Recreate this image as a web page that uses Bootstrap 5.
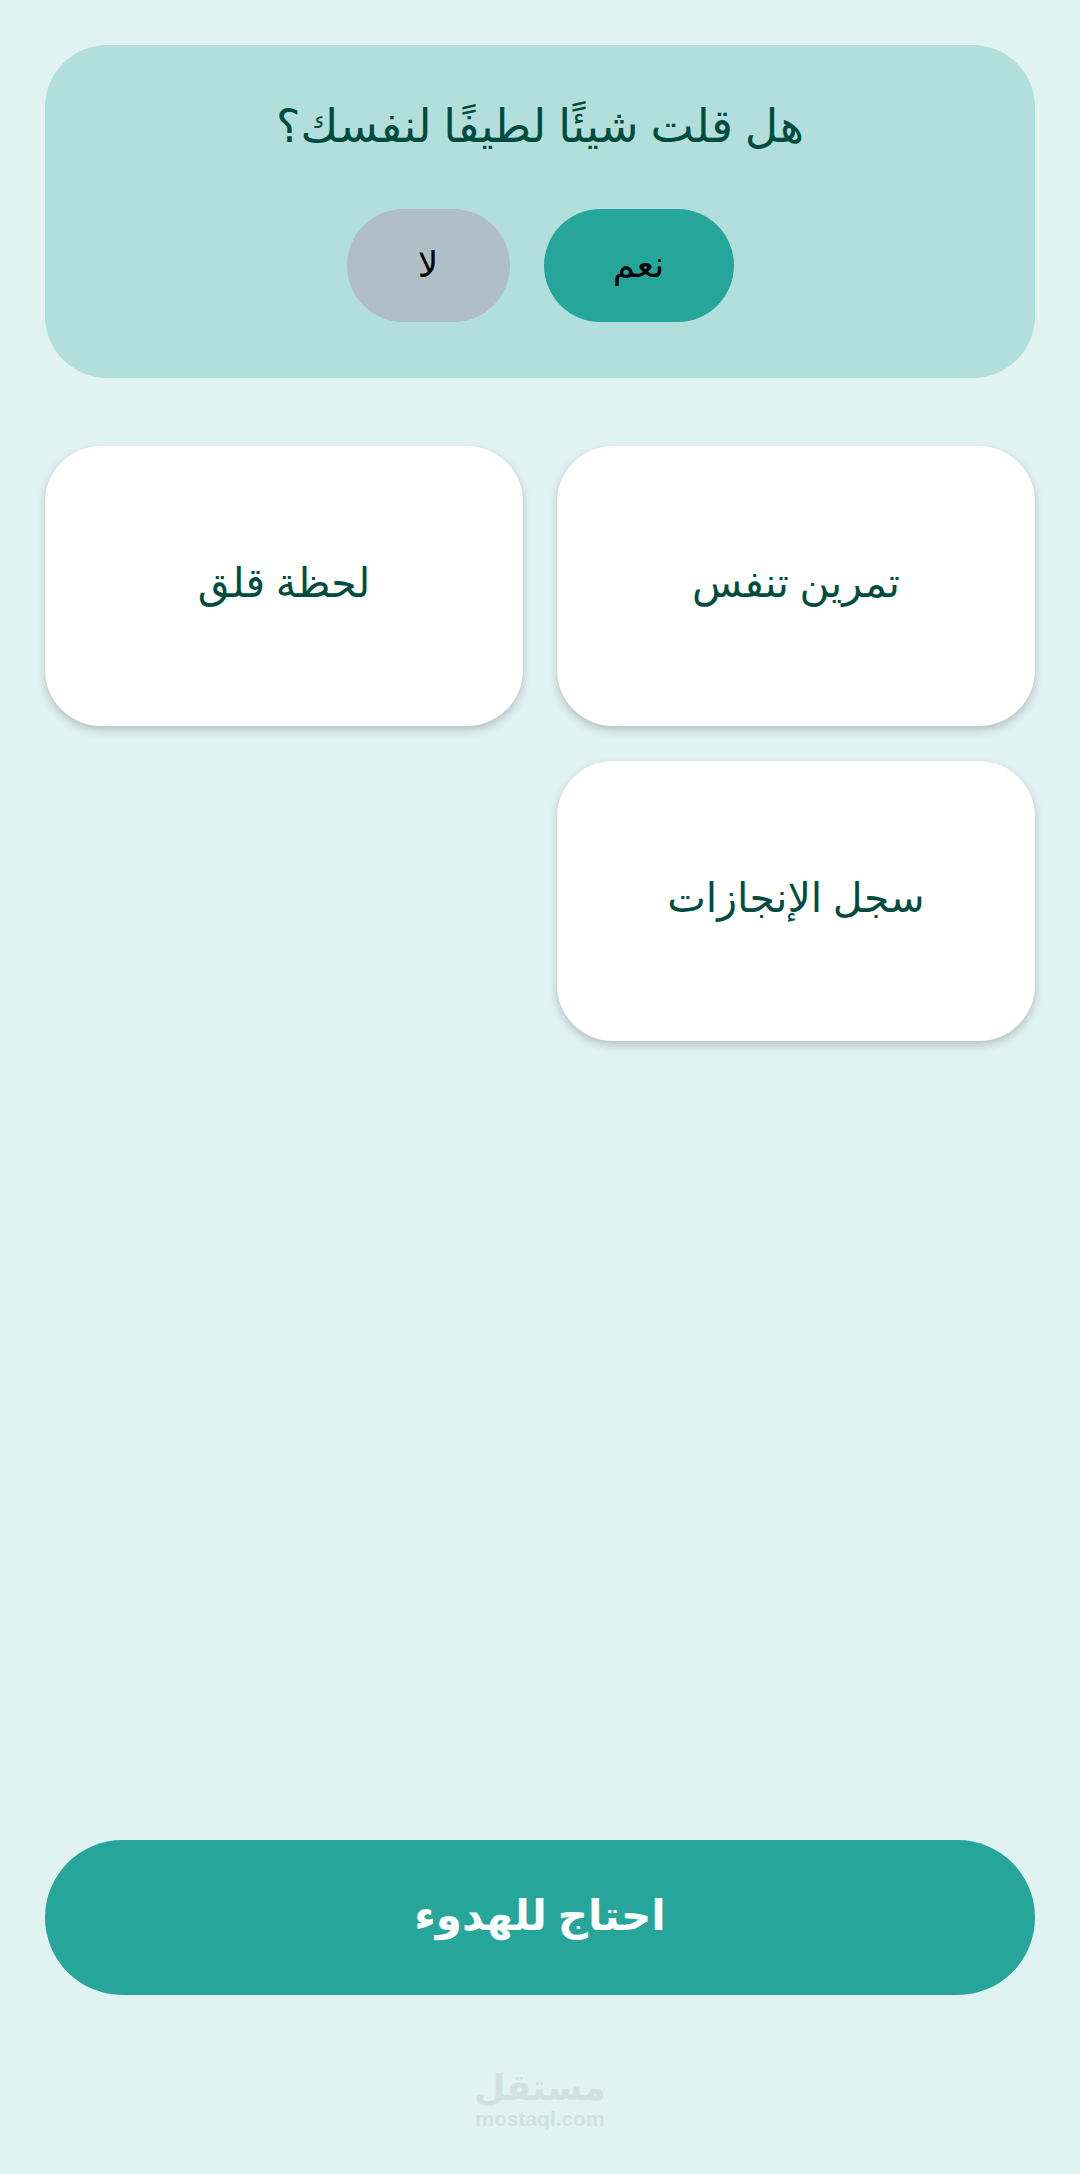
<!DOCTYPE html>
<html lang="ar" dir="rtl">
<head>
    <meta charset="UTF-8">
    <meta name="viewport" content="width=device-width, initial-scale=1.0">
    <title>احتاج للهدوء</title>
    <link href="https://cdn.jsdelivr.net/npm/bootstrap@5.3.2/dist/css/bootstrap.min.css" rel="stylesheet">
    <style>
        body {
            background-color: #e0f2f1;
            font-family: "Noto Sans", "DejaVu Sans", sans-serif;
        }
        .page-wrap {
            height: 2174px;
            padding: 45px 45px 0;
        }
        .ask-panel {
            height: 333px;
            background-color: #b2dfdb;
            border-radius: 62px;
            padding-top: 44px;
        }
        .ask-title {
            color: #004d40;
            font-size: 46px;
            font-weight: 400;
            line-height: 70px;
            margin-bottom: 50px;
        }
        .ask-btn {
            height: 113px;
            border: 0;
            border-radius: 57px;
            color: #000;
            font-size: 36px;
            padding-bottom: 10px;
        }
        .ask-yes { width: 190px; background-color: #26a69a; }
        .ask-no { width: 163px; background-color: #b0bec5; }
        .ask-btns { gap: 34px; }
        .tile-row {
            --bs-gutter-x: 34px;
            --bs-gutter-y: 35px;
            margin-top: 33px;
        }
        .tile {
            height: 280px;
            padding-bottom: 8px;
            background-color: #fff;
            border-radius: 56px;
            box-shadow: 0 4px 10px rgba(0, 0, 0, 0.2);
            color: #004d40;
            font-size: 41px;
        }
        .calm-btn {
            height: 155px;
            padding-bottom: 14px;
            background-color: #26a69a;
            border: 0;
            border-radius: 78px;
            color: #fff;
            font-size: 42px;
            font-weight: 700;
        }
        .brand-mark {
            height: 179px;
            color: #d3e0e1;
            line-height: 1;
            padding-top: 72px;
        }
        .brand-ar { font-size: 36px; font-weight: 700; line-height: 40px; }
        .brand-en { font-family: "Liberation Sans", sans-serif; font-size: 21px; font-weight: 700; line-height: 24px; }
    </style>
</head>
<body>
    <div class="page-wrap d-flex flex-column">
        <div class="ask-panel text-center">
            <h1 class="ask-title">هل قلت شيئًا لطيفًا لنفسك؟</h1>
            <div class="ask-btns d-flex justify-content-center">
                <button class="btn ask-btn ask-yes">نعم</button>
                <button class="btn ask-btn ask-no">لا</button>
            </div>
        </div>

        <div class="row tile-row">
            <div class="col-6">
                <div class="tile d-flex align-items-center justify-content-center">تمرين تنفس</div>
            </div>
            <div class="col-6">
                <div class="tile d-flex align-items-center justify-content-center">لحظة قلق</div>
            </div>
            <div class="col-6">
                <div class="tile d-flex align-items-center justify-content-center">سجل الإنجازات</div>
            </div>
        </div>

        <button class="btn calm-btn w-100 mt-auto">احتاج للهدوء</button>

        <div class="brand-mark text-center">
            <div class="brand-ar">مستقل</div>
            <div class="brand-en" dir="ltr">mostaql.com</div>
        </div>
    </div>
    <script src="https://cdn.jsdelivr.net/npm/bootstrap@5.3.2/dist/js/bootstrap.bundle.min.js"></script>
</body>
</html>
